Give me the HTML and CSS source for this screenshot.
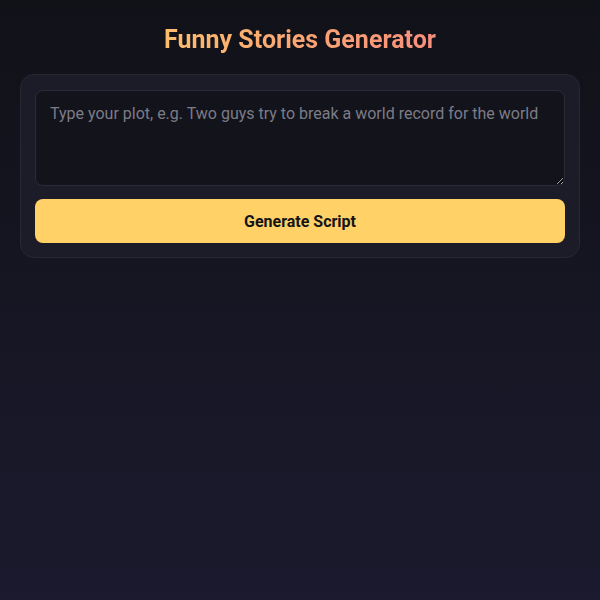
FILE: index.html
```html
<!DOCTYPE html>
<html lang="en">
<head>
    <meta charset="UTF-8">
    <meta name="viewport" content="width=device-width, initial-scale=1.0">
    <title>Funny Stories Generator</title>
    <link rel="stylesheet" href="styles.css">
</head>
<body>
    <div class="container">
        <h1 class="title">Funny Stories Generator</h1>
        <div class="card">
            <textarea id="plot" class="plot-input" placeholder="Type your plot, e.g. Two guys try to break a world record for the world"></textarea>
            <button class="generate-button">Generate Script</button>
        </div>
    </div>
</body>
</html>
```

FILE: styles.css
```css
html, body {
    min-height: 100%;
    margin: 0;
}
body {
    font-family: Roboto, "Liberation Sans", sans-serif;
    background: linear-gradient(180deg, #111118 0%, #1b1a2e 100%);
    color: #e0e0e0;
}
.container {
    padding: 24px 20px;
}
.title {
    margin: 0 auto 18px auto;
    width: fit-content;
    font-size: 25px;
    line-height: 32px;
    font-weight: 700;
    text-align: center;
    background: linear-gradient(90deg, #fdbd6c 0%, #f78f7c 100%);
    background-clip: text;
    -webkit-background-clip: text;
    color: transparent;
}
.card {
    background-color: #1c1c28;
    border: 1px solid #272735;
    border-radius: 14px;
    padding: 15px 14px 14px 14px;
    display: flex;
    flex-direction: column;
    gap: 13px;
}
.plot-input {
    height: 96px;
    box-sizing: border-box;
    background-color: #13131c;
    color: #e0e0e0;
    border: 1px solid #2a2a38;
    border-radius: 8px;
    padding: 12px 14px;
    font-family: inherit;
    font-size: 16px;
    line-height: 22px;
    resize: vertical;
    outline: none;
}
.plot-input::placeholder {
    color: #7c7c86;
}
.generate-button {
    height: 44px;
    background-color: #ffd166;
    color: #141418;
    border: none;
    border-radius: 8px;
    font-family: inherit;
    font-size: 16px;
    font-weight: 700;
    cursor: pointer;
}
```
